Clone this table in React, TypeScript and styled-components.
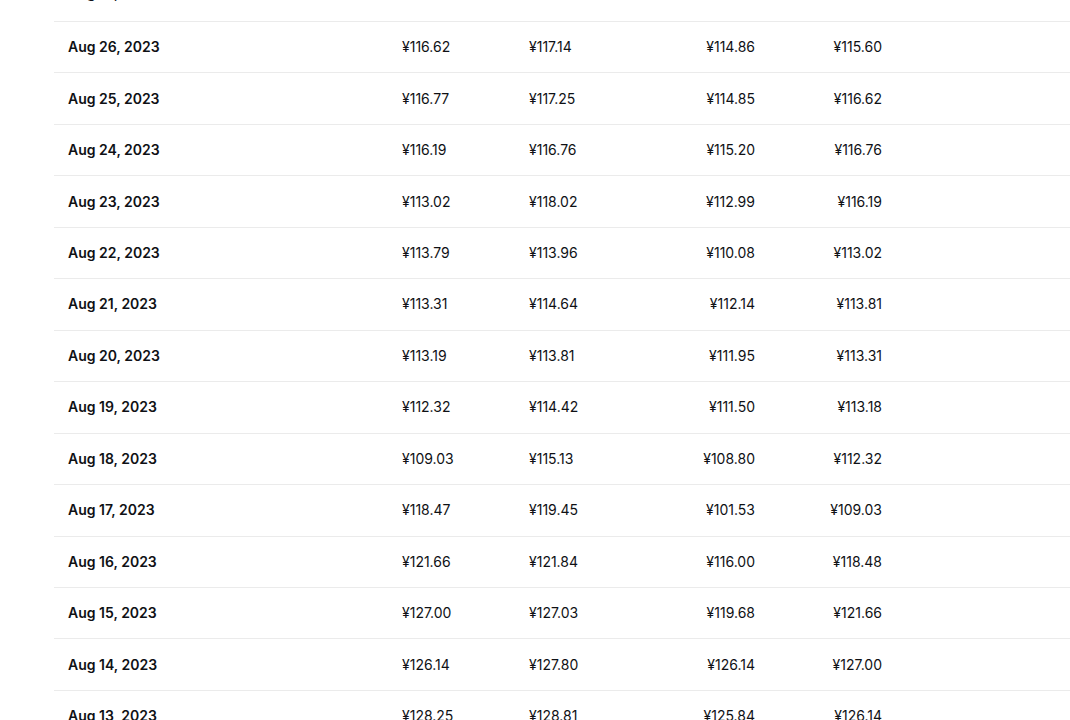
import styled, { createGlobalStyle } from "styled-components";

interface PriceRow {
  date: string;
  open: string;
  high: string;
  low: string;
  close: string;
}

const rows: PriceRow[] = [
  { date: "Aug 27, 2023", open: "¥115.60", high: "¥116.05", low: "¥114.90", close: "¥115.88" },
  { date: "Aug 26, 2023", open: "¥116.62", high: "¥117.14", low: "¥114.86", close: "¥115.60" },
  { date: "Aug 25, 2023", open: "¥116.77", high: "¥117.25", low: "¥114.85", close: "¥116.62" },
  { date: "Aug 24, 2023", open: "¥116.19", high: "¥116.76", low: "¥115.20", close: "¥116.76" },
  { date: "Aug 23, 2023", open: "¥113.02", high: "¥118.02", low: "¥112.99", close: "¥116.19" },
  { date: "Aug 22, 2023", open: "¥113.79", high: "¥113.96", low: "¥110.08", close: "¥113.02" },
  { date: "Aug 21, 2023", open: "¥113.31", high: "¥114.64", low: "¥112.14", close: "¥113.81" },
  { date: "Aug 20, 2023", open: "¥113.19", high: "¥113.81", low: "¥111.95", close: "¥113.31" },
  { date: "Aug 19, 2023", open: "¥112.32", high: "¥114.42", low: "¥111.50", close: "¥113.18" },
  { date: "Aug 18, 2023", open: "¥109.03", high: "¥115.13", low: "¥108.80", close: "¥112.32" },
  { date: "Aug 17, 2023", open: "¥118.47", high: "¥119.45", low: "¥101.53", close: "¥109.03" },
  { date: "Aug 16, 2023", open: "¥121.66", high: "¥121.84", low: "¥116.00", close: "¥118.48" },
  { date: "Aug 15, 2023", open: "¥127.00", high: "¥127.03", low: "¥119.68", close: "¥121.66" },
  { date: "Aug 14, 2023", open: "¥126.14", high: "¥127.80", low: "¥126.14", close: "¥127.00" },
  { date: "Aug 13, 2023", open: "¥128.25", high: "¥128.81", low: "¥125.84", close: "¥126.14" },
  { date: "Aug 12, 2023", open: "¥127.90", high: "¥129.10", low: "¥127.05", close: "¥128.25" },
];

const GlobalStyle = createGlobalStyle`
  html, body {
    margin: 0;
    padding: 0;
    background: #fff;
    overflow: hidden;
  }
  body {
    font-family: Inter, "Liberation Sans", sans-serif;
    color: #0f1115;
  }
`;

const Page = styled.div`
  height: 720px;
  overflow: hidden;
  padding-left: 54px;
`;

// the table is scrolled: the first row sits mostly above the window
const Scroller = styled.div`
  margin-top: -35px;
`;

const Table = styled.table`
  width: 1100px;
  border-collapse: separate;
  border-spacing: 0;
  table-layout: fixed;
  font-size: 14px;
  line-height: 20px;
`;

const Row = styled.tr``;

const Cell = styled.td<{ $align?: "left" | "right"; $bold?: boolean; $tall?: boolean }>`
  box-sizing: border-box;
  height: ${(p) => (p.$tall ? "57px" : "51.46px")};
  padding: 0 14px;
  border-bottom: 1px solid #ebebeb;
  text-align: ${(p) => p.$align ?? "left"};
  font-weight: ${(p) => (p.$bold ? 600 : 400)};
  white-space: nowrap;
  vertical-align: middle;
`;

export default function App() {
  return (
    <>
      <GlobalStyle />
      <Page>
        <Scroller>
          <Table>
            <colgroup>
              <col style={{ width: 334 }} />
              <col style={{ width: 127 }} />
              <col style={{ width: 127 }} />
              <col style={{ width: 127 }} />
              <col style={{ width: 127 }} />
              <col />
            </colgroup>
            <tbody>
              {rows.map((r, i) => (
                <Row key={r.date}>
                  <Cell $tall={i === 0} $bold>{r.date}</Cell>
                  <Cell $tall={i === 0}>{r.open}</Cell>
                  <Cell $tall={i === 0}>{r.high}</Cell>
                  <Cell $tall={i === 0} $align="right">{r.low}</Cell>
                  <Cell $tall={i === 0} $align="right">{r.close}</Cell>
                  <Cell $tall={i === 0} />
                </Row>
              ))}
            </tbody>
          </Table>
        </Scroller>
      </Page>
    </>
  );
}
